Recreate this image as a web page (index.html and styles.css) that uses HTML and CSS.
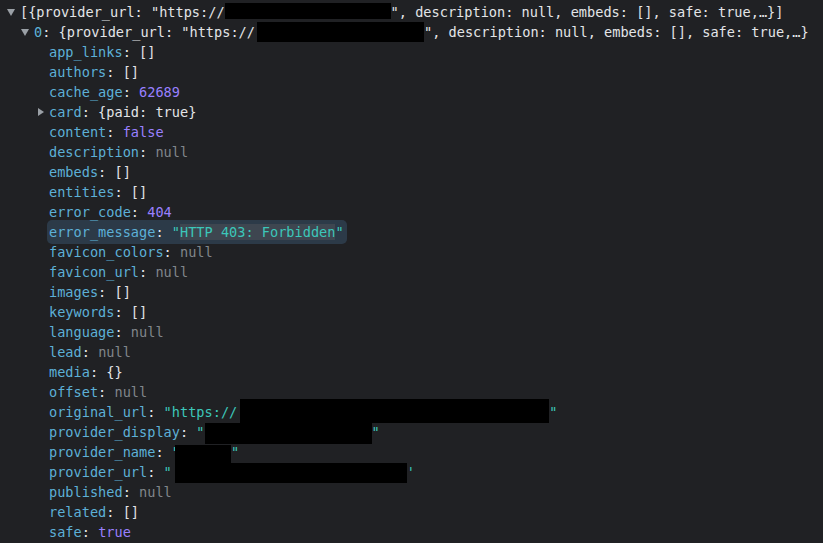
FILE: index.html
```html
<!DOCTYPE html>
<html>
<head>
<meta charset="utf-8">
<link rel="stylesheet" href="styles.css">
</head>
<body>
<div class="tree">
  <div class="row lv0"><span class="tri down"></span><span class="p">[{provider_url: "https://</span><span class="redact r1"></span><span class="p">", description: null, embeds: [], safe: true,…}]</span></div>
  <div class="row lv1"><span class="tri down"></span><span class="k">0</span><span class="p">: {provider_url: "https://</span><span class="redact r2"></span><span class="p">", description: null, embeds: [], safe: true,…}</span></div>
  <div class="row lv2"><span class="k">app_links</span><span class="p">: []</span></div>
  <div class="row lv2"><span class="k">authors</span><span class="p">: []</span></div>
  <div class="row lv2"><span class="k">cache_age</span><span class="p">: </span><span class="n">62689</span></div>
  <div class="row lv2c"><span class="tri right"></span><span class="k">card</span><span class="p">: {paid: true}</span></div>
  <div class="row lv2"><span class="k">content</span><span class="p">: </span><span class="n">false</span></div>
  <div class="row lv2"><span class="k">description</span><span class="p">: </span><span class="nl">null</span></div>
  <div class="row lv2"><span class="k">embeds</span><span class="p">: []</span></div>
  <div class="row lv2"><span class="k">entities</span><span class="p">: []</span></div>
  <div class="row lv2"><span class="k">error_code</span><span class="p">: </span><span class="n">404</span></div>
  <div class="row lv2 hlrow"><span class="hl"><span class="k">error_message</span><span class="p">: </span><span class="s">"<span class="sel">HTTP 403: Forbidden</span>"</span></span></div>
  <div class="row lv2"><span class="k">favicon_colors</span><span class="p">: </span><span class="nl">null</span></div>
  <div class="row lv2"><span class="k">favicon_url</span><span class="p">: </span><span class="nl">null</span></div>
  <div class="row lv2"><span class="k">images</span><span class="p">: []</span></div>
  <div class="row lv2"><span class="k">keywords</span><span class="p">: []</span></div>
  <div class="row lv2"><span class="k">language</span><span class="p">: </span><span class="nl">null</span></div>
  <div class="row lv2"><span class="k">lead</span><span class="p">: </span><span class="nl">null</span></div>
  <div class="row lv2"><span class="k">media</span><span class="p">: {}</span></div>
  <div class="row lv2"><span class="k">offset</span><span class="p">: </span><span class="nl">null</span></div>
  <div class="row lv2"><span class="k">original_url</span><span class="p">: </span><span class="s">"https://</span><span class="redact r3"></span><span class="s">"</span></div>
  <div class="row lv2"><span class="k">provider_display</span><span class="p">: </span><span class="s">"</span><span class="redact r4"></span><span class="s">"</span></div>
  <div class="row lv2"><span class="k">provider_name</span><span class="p">: </span><span class="s">"</span><span class="redact r5"></span><span class="s">"</span></div>
  <div class="row lv2"><span class="k">provider_url</span><span class="p">: </span><span class="s">"</span><span class="redact r6"></span><span class="s">'</span></div>
  <div class="row lv2"><span class="k">published</span><span class="p">: </span><span class="nl">null</span></div>
  <div class="row lv2"><span class="k">related</span><span class="p">: []</span></div>
  <div class="row lv2"><span class="k">safe</span><span class="p">: </span><span class="n">true</span></div>
</div>
</body>
</html>
```

FILE: styles.css
```css
html {
  margin: 0;
  padding: 0;
  background: #202124;
  height: 100%;
  overflow: hidden;
}

body {
  margin: 0;
  padding: 0;
}

.tree {
  padding-top: 2px;
  font-family: "DejaVu Sans Mono", "Liberation Mono", monospace;
  font-size: 13.6px;
  color: #dfe1e5;
}

.row {
  height: 20px;
  line-height: 20px;
  white-space: pre;
  display: flex;
  align-items: center;
}

.hlrow {
  position: relative;
  z-index: -1;
}

.lv0 { padding-left: 7px; }
.lv1 { padding-left: 21px; }
.lv2 { padding-left: 49px; }
.lv2c { padding-left: 38px; }

.tri {
  display: inline-block;
  width: 0;
  height: 0;
  flex: none;
}

.tri.down {
  border-left: 4px solid transparent;
  border-right: 4px solid transparent;
  border-top: 7px solid #9aa0a6;
  margin-right: 5px;
  margin-top: 1px;
}

.tri.right {
  border-top: 4px solid transparent;
  border-bottom: 4px solid transparent;
  border-left: 6px solid #9aa0a6;
  margin-right: 5px;
}

.p { color: #e3e5e8; }
.k { color: #5db0d7; }
.n { color: #9980ff; }
.nl { color: #80868b; }
.s { color: #3cc7ba; }

.hl {
  display: inline-block;
  background: #2c3a48;
  border-radius: 5px;
  padding: 2px 3px 2px 2px;
  margin-left: -2px;
  line-height: 20px;
}

.sel {
  background: #3e4650;
}

.redact {
  display: inline-block;
  background: #000;
  flex: none;
  align-self: flex-start;
}

.r1 { width: 166px; height: 16px; margin-top: 1px; }
.r2 { width: 167px; height: 20px; margin-left: 2px; }
.r3 { width: 309px; height: 24px; margin-top: -3px; margin-left: 3px; }
.r4 { width: 167px; height: 21px; margin-top: 1px; }
.r5 { width: 56px; height: 20px; margin-top: 3px; margin-left: -5px; }
.r6 { width: 232px; height: 20px; margin-top: 1px; margin-left: 3px; }
```
